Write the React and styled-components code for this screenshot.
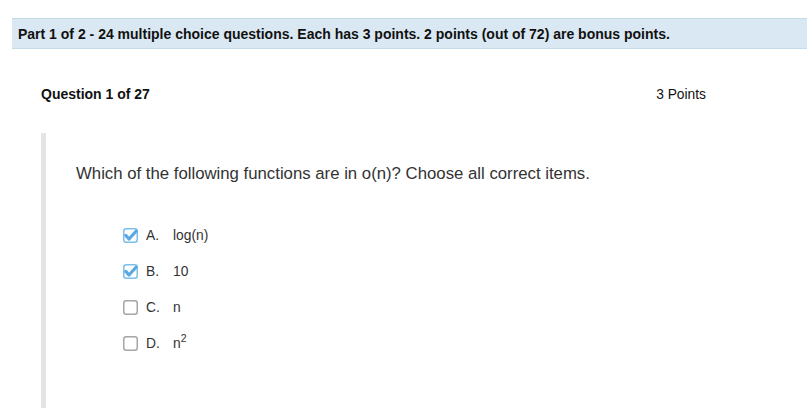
import styled, { createGlobalStyle } from "styled-components";

const GlobalStyle = createGlobalStyle`
  body {
    margin: 0;
    background: #fff;
    font-family: "Liberation Sans", Arial, sans-serif;
    color: #222;
  }
`;

const Page = styled.div`
  padding: 18px 0 0 12px;
  height: 390px;
  overflow: hidden;
`;

const Banner = styled.div`
  display: flex;
  align-items: center;
  height: 29px;
  padding: 0 6px;
  background: #d9e8f2;
  border-top: 1px solid #c4dcea;
  border-bottom: 1px solid #c4dcea;
  font-size: 14px;
  font-weight: bold;
  color: #111;
`;

const QuestionHeader = styled.div`
  display: flex;
  justify-content: space-between;
  align-items: center;
  margin: 37px 101px 0 29px;
  height: 16px;
  font-size: 13.8px;
  color: #111;
`;

const QuestionTitle = styled.span`
  font-weight: bold;
  font-size: 14px;
`;

const QuestionBody = styled.div`
  margin: 31px 0 0 29px;
  border-left: 5px solid #e4e4e4;
  padding: 31px 0 0 30px;
  min-height: 300px;
`;

const Prompt = styled.div`
  font-size: 16.75px;
  line-height: 20px;
  color: #333;
`;

const Options = styled.div`
  margin: 33px 0 0 47px;
`;

const Row = styled.label`
  display: flex;
  align-items: center;
  height: 36px;
  font-size: 13.8px;
  color: #333;
`;

const Letter = styled.span`
  margin-left: 8px;
  width: 27px;
`;

const Box = styled.svg`
  width: 15px;
  height: 15px;
  flex: none;
`;

const Check = ({ checked }) => (
  <Box viewBox="0 0 15 15">
    <rect
      x="0.75"
      y="0.75"
      width="13.5"
      height="13.5"
      rx="2.5"
      fill="#fff"
      stroke={checked ? "#7dbfeb" : "#a6a6a6"}
      strokeWidth="1.5"
    />
    {checked && (
      <path
        d="M2.8 7.4 L6 11 L13 3.2"
        fill="none"
        stroke="#5aa9e4"
        strokeWidth="3.2"
        strokeLinecap="round"
        strokeLinejoin="round"
      />
    )}
  </Box>
);

const Sup = styled.sup`
  font-size: 10.5px;
  line-height: 0;
`;

const options = [
  { letter: "A.", text: "log(n)", checked: true },
  { letter: "B.", text: "10", checked: true },
  { letter: "C.", text: "n", checked: false },
  { letter: "D.", text: <>n<Sup>2</Sup></>, checked: false },
];

export default function App() {
  return (
    <>
      <GlobalStyle />
      <Page>
        <Banner>
          Part 1 of 2 - 24 multiple choice questions. Each has 3 points. 2 points (out of 72) are bonus points.
        </Banner>
        <QuestionHeader>
          <QuestionTitle>Question 1 of 27</QuestionTitle>
          <span>3 Points</span>
        </QuestionHeader>
        <QuestionBody>
          <Prompt>Which of the following functions are in o(n)? Choose all correct items.</Prompt>
          <Options>
            {options.map((o) => (
              <Row key={o.letter}>
                <Check checked={o.checked} />
                <Letter>{o.letter}</Letter>
                <span>{o.text}</span>
              </Row>
            ))}
          </Options>
        </QuestionBody>
      </Page>
    </>
  );
}
